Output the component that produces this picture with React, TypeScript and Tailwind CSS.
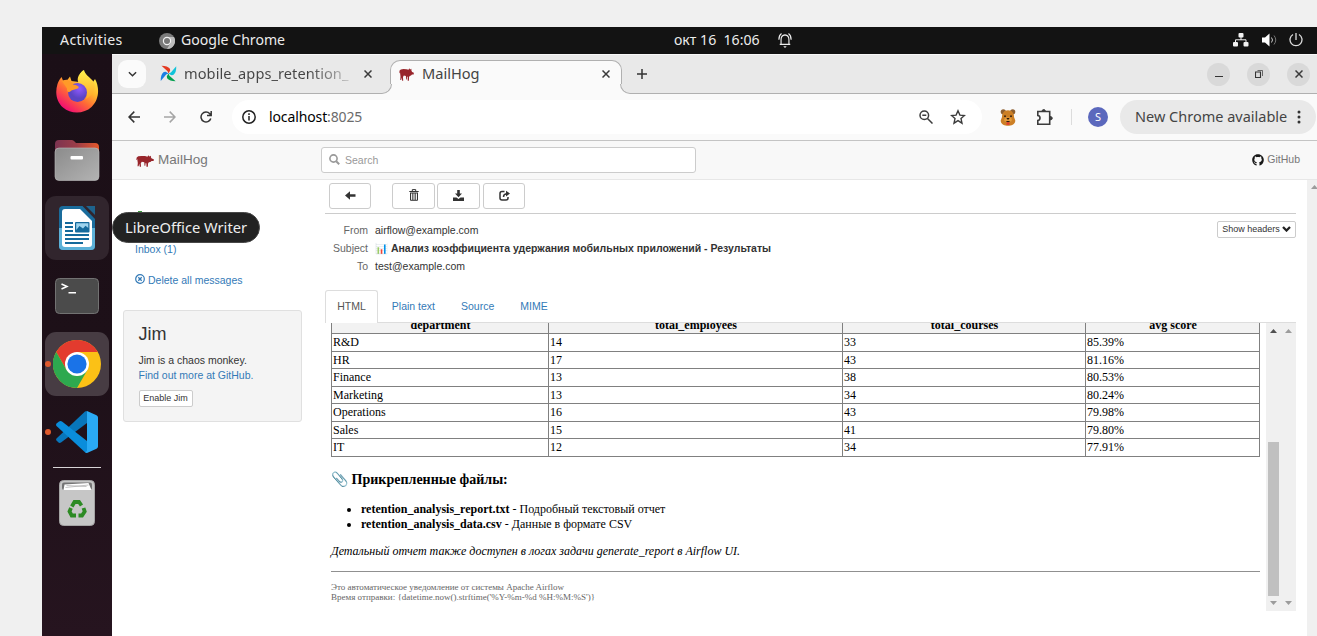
import React from "react";
import { FaGithub } from "react-icons/fa";

const UI = "font-['Noto_Sans',sans-serif]";

function Pig({ className }: { className?: string }) {
  return (
    <svg viewBox="0 0 20 14" className={className} fill="#98252b" preserveAspectRatio="none">
      <path d="M.3 5.500 .8 2.800 2.500 1.500 6 1.100 10 1.300 12.800 2 13.600 .3 14.800 1.700 16.500 .8 16.600 2.900 17.500 4.200 19.800 5 19.600 6.900 17.300 7.100 16 8.200 14.300 8.500 13.400 9.800 13.200 13.700 11.600 13.700 11.600 9.800 10.700 9.200 10.300 12.500 9.400 12.500 9.200 8.600 6.500 8 5.300 9.700 5.600 13.700 4.200 13.700 3.700 10.300 2.900 13 1.700 13 2 9.200 1.600 6.500 1.300 4.300 .9 5.700Z" />
    </svg>
  );
}

function Pinwheel() {
  return (
    <svg viewBox="0 0 18 18" className="h-[17px] w-[17px] shrink-0">
      <path d="M9 9 8 6.500 1.600 .8Q8 .8 10.500 4L10.800 5.800Z" fill="#e43921" />
      <path d="M9 9 11.500 8 17.200 1.200Q17.500 8 14 10.500L12 10.800Z" fill="#11c3d9" />
      <path d="M9 9 10 11.500 16.600 17.200Q10 17.200 7.500 14L7.200 12Z" fill="#04a04f" />
      <path d="M9 9 6.500 10 .8 17Q.5 10 4 7.500L6 7.200Z" fill="#1b7fe4" />
    </svg>
  );
}

function ChromeLogo({ className }: { className?: string }) {
  return (
    <svg viewBox="0 0 48 48" className={className}>
      <circle cx="24" cy="24" r="24" fill="#fbc116" />
      <path d="M3.200 12A24 24 0 0 1 44.800 12H24L13.600 30Z" fill="#e33b2e" />
      <path d="M3.200 12 13.600 30 24 36 34.400 30 24 48A24 24 0 0 1 3.200 12Z" fill="#2da94f" />
      <circle cx="24" cy="24" r="12" fill="#fff" />
      <circle cx="24" cy="24" r="9.600" fill="#1a73e8" />
    </svg>
  );
}

function ChromeMono() {
  return (
    <svg viewBox="0 0 16 16" className="ml-[36px] h-4 w-4">
      <circle cx="8" cy="8" r="8" fill="#7b7b7b" />
      <path d="M8 4H15A8 8 0 0 1 8 16L11.500 10Z" fill="#bcbcbc" />
      <circle cx="8" cy="8" r="4.200" fill="#f2f2f2" />
      <circle cx="8" cy="8" r="3" fill="#777" />
    </svg>
  );
}

function Firefox() {
  return (
    <svg viewBox="0 0 44 44" className="-mt-[2px] h-11 w-11">
      <defs>
        <linearGradient id="fox" x1=".85" y1=".1" x2=".25" y2=".95">
          <stop offset="0" stopColor="#fff04a" />
          <stop offset=".35" stopColor="#ffb52c" />
          <stop offset=".62" stopColor="#ff6b35" />
          <stop offset="1" stopColor="#f20d72" />
        </linearGradient>
        <linearGradient id="tail" x1=".5" y1="0" x2=".5" y2="1">
          <stop offset="0" stopColor="#fff14c" />
          <stop offset="1" stopColor="#ffa62a" />
        </linearGradient>
        <radialGradient id="globe" cx=".6" cy=".3">
          <stop offset="0" stopColor="#9059ff" />
          <stop offset="1" stopColor="#5b44c4" />
        </radialGradient>
      </defs>
      <path d="M2.500 15C3.500 11.500 5.500 9.500 6.500 8L8 11.500C9.500 11 11 10.500 12.500 10.800L15 7.500 16.500 12 24 13 25 5 29 1C30 6 35 8 38 13L40 10C45 19 44 31 36.500 38 29 45 16 45.500 8 38.500 1 32 0 23 2.500 15Z" fill="url(#fox)" />
      <path d="M28.500 1C22.500 6 21.500 11 24 14.500 31 18.500 33 25 31 30 39 26 42 18 38 12 34 8 30 6 28.500 1Z" fill="url(#tail)" />
      <circle cx="22.500" cy="23.500" r="9.500" fill="url(#globe)" />
      <path d="M7 12C13 10 17 13 18 15.500 22 16 24.500 17.500 23.500 19 20 21 17 20.500 16 22 13.500 24.500 11.500 22.500 12 19.500Z" fill="#ff9a28" />
    </svg>
  );
}

function Files() {
  return (
    <svg viewBox="0 0 46 42" className="-mt-px h-[42px] w-[46px]">
      <defs>
        <linearGradient id="fback"><stop offset="0" stopColor="#7c3350" /><stop offset=".5" stopColor="#9c3d48" /><stop offset="1" stopColor="#e6592b" /></linearGradient>
        <linearGradient id="ffront" x2="1" y2="1"><stop offset="0" stopColor="#8b8b8b" /><stop offset="1" stopColor="#b3b3b3" /></linearGradient>
      </defs>
      <path d="M1 5Q1 1 5 1H17.500Q19 1 20 2L22 4H41Q45 4 45 8V20H1Z" fill="url(#fback)" />
      <rect x="1" y="9" width="44" height="32.500" rx="4" fill="url(#ffront)" stroke="#bdbdbd" strokeWidth=".6" />
      <rect x="16.500" y="17" width="12.500" height="3.500" rx="1" fill="#fff" />
    </svg>
  );
}

function Writer() {
  return (
    <svg viewBox="0 0 38 46" className="h-[46px] w-[38px]">
      <path d="M5 1H24.500L37 14V41Q37 45 33 45H5Q1 45 1 41V5Q1 1 5 1Z" fill="#1a6c9c" />
      <path d="M1 23H37V41Q37 45 33 45H5Q1 45 1 41Z" fill="#5cb1d8" />
      <path d="M28 1H37V10Z" fill="#1e638d" />
      <path d="M7 4H22L34 16V39Q34 42 31 42H7Q4 42 4 39V7Q4 4 7 4Z" fill="#fff" />
      <g fill="#156a9c">
        <path d="M7 17h8v2H7zM7 21h8v2H7zM7 25h8v2H7zM7 29h24v2H7zM7 33h24v2H7zM7 37h18v2H7z" />
        <rect x="17" y="17" width="14.500" height="10.500" rx="1" />
      </g>
      <path d="M18.200 18.200H30.300V23L27.500 20.800 25 23.500 21.500 21 18.200 25Z" fill="#9ed4ee" />
    </svg>
  );
}

function Terminal() {
  return (
    <svg viewBox="0 0 44 36" className="h-9 w-11">
      <rect x=".5" y=".5" width="43" height="35" rx="4" fill="#4b4b4b" stroke="#727272" />
      <path d="M6.500 6 12 8.500 6.500 11M13.500 14.700H21" fill="none" stroke="#fff" strokeWidth="1.500" />
    </svg>
  );
}

function Code() {
  return (
    <svg viewBox="0 0 42 42" className="h-[42px] w-[42px]">
      <path d="M.5 27.500 29 .5 31 0V12L5 31.500Q3.500 32.500 2 31L.5 29.500Q-.3 28.500 .5 27.500Z" fill="#0876bb" />
      <path d="M.5 12.500 3 10.500Q4.500 9.500 6 10.500L31 30V42L29 41.300 .5 15Q-.3 13.500 .5 12.500Z" fill="#0a8ddb" />
      <path d="M31 0 40.500 4.200Q42 5 42 6.500V35.500Q42 37 40.500 37.800L31 42 29 41.300 31 40V2Z" fill="#2aaaf4" />
    </svg>
  );
}

function Trash() {
  return (
    <svg viewBox="0 0 36 46" className="-mt-[3px] h-[46px] w-9">
      <rect x=".5" y=".5" width="35" height="45" rx="4" fill="#c6c6c6" stroke="#a4a4a4" />
      <rect x="3" y="2.500" width="30" height="7.500" rx="2" fill="#747474" />
      <path d="M5.500 4.500 29.500 3 32.500 10H4.500Z" fill="#fff" />
      <path d="M7.500 5.500 27.500 6.500M6.500 7.500 29.500 5" stroke="#aaa" strokeWidth=".7" />
      <g fill="none" stroke="#2c8a23" strokeWidth="3.800">
        <path d="M12.800 26.500 15.500 22H20L22.500 25.500" />
        <path d="M24.500 28 25.700 31.500 23 35.500H19.500" />
        <path d="M17 35.500H12.700L10.500 31.500 12 28" />
      </g>
    </svg>
  );
}

function Tile({ children, tone = "", dot }: { children: React.ReactNode; tone?: string; dot?: boolean }) {
  return (
    <div className={`relative flex h-16 w-16 shrink-0 items-center justify-center rounded-[11px] ${tone}`}>
      {dot && <span className="absolute left-0 top-[29px] h-[6px] w-[6px] rounded-full bg-[#e05a2c]" />}
      {children}
    </div>
  );
}

function Dock() {
  return (
    <aside className="relative flex w-[70px] shrink-0 flex-col items-center gap-1 bg-gradient-to-b from-[#1b0f17] via-[#1d1018] to-[#26141f] pt-[6px]">
      <Tile><Firefox /></Tile>
      <Tile><Files /></Tile>
      <Tile tone="bg-[#31252d]"><Writer /></Tile>
      <Tile><Terminal /></Tile>
      <Tile tone="bg-[#473c43]" dot><ChromeLogo className="h-12 w-12" /></Tile>
      <Tile dot><Code /></Tile>
      <div className="-mt-[1px] h-px w-12 shrink-0 bg-[#d8d4d6]" />
      <Tile><Trash /></Tile>
      <div className={`absolute left-[70px] top-[158px] z-10 flex h-[31px] w-[148px] items-center justify-center rounded-full border border-[#484848] bg-[#222] text-[14.700px] whitespace-nowrap text-[#eee] ${UI}`}>
        LibreOffice Writer
      </div>
    </aside>
  );
}

function TopBar() {
  return (
    <header className={`flex h-[27px] shrink-0 items-center bg-[#131313] pl-[18px] text-[14.100px] text-[#ececec] ${UI}`}>
      <span className="-mt-[2px] w-[63px] tracking-[0.400px] whitespace-nowrap">Activities</span>
      <ChromeMono />
      <span className="-mt-[2px] ml-[6px] w-[493px] whitespace-nowrap">Google Chrome</span>
      <span className="-mt-[2px] w-[104px] whitespace-pre">окт 16  16:06</span>
      <svg viewBox="0 0 16 18" className="-mt-px h-[17px] w-[14px]" fill="none" stroke="#eee" strokeWidth="1.300">
        <path d="M2 13.500H14M3.500 13.500V8Q3.500 3 8 2.500 12.500 3 12.500 8V13.500M1 8Q1 3 4 1M15 8Q15 3 12 1" />
        <path d="M6 15.500H10L8 17.500Z" fill="#eee" stroke="none" />
      </svg>
      <div className="-mt-px mr-[14px] ml-auto flex items-center gap-[12.500px]">
        <svg viewBox="0 0 16 14" className="h-[14px] w-4" fill="#f2f2f2">
          <rect x="5.500" y="0" width="5" height="4.500" rx="1" /><rect x="0" y="9" width="5" height="4.500" rx="1" /><rect x="10.500" y="9" width="5" height="4.500" rx="1" />
          <path d="M2.500 9V6.800H13V9M8 4V7" fill="none" stroke="#f2f2f2" />
        </svg>
        <svg viewBox="0 0 15 14" className="h-[14px] w-[15px]">
          <path d="M0 4.500H3L7.500 .5V13.500L3 9.500H0Z" fill="#fff" />
          <path d="M9.500 4.500Q11.500 7 9.500 9.500" fill="none" stroke="#ccc" /><path d="M12 2.500Q15.500 7 12 11.500" fill="none" stroke="#777" />
        </svg>
        <svg viewBox="0 0 14 14" className="h-[14px] w-[14px]" fill="none" stroke="#ddd" strokeWidth="1.300">
          <path d="M7 0V7M4 1.500A6 6 0 1 0 10 1.500" />
        </svg>
      </div>
    </header>
  );
}

function Cross({ className = "" }: { className?: string }) {
  return (
    <svg viewBox="0 0 8 8" className={`h-2 w-2 shrink-0 ${className}`} stroke="#3a3a3a" strokeWidth="1.500"><path d="M.5 .5 7.500 7.500M7.500 .5 .5 7.500" /></svg>
  );
}

function TabStrip() {
  return (
    <div className={`flex h-10 shrink-0 items-center border-t border-b border-t-[#f8f8f8] border-b-[#b0b0b0] bg-[#e9e9e9] pl-[6px] text-[14.600px] text-[#444] ${UI}`}>
      <div className="flex h-7 w-7 items-center justify-center rounded-[9px] bg-[#fbfbfb]">
        <svg viewBox="0 0 10 6" className="h-[6px] w-[9px]" fill="none" stroke="#333" strokeWidth="1.600"><path d="M1 1 5 5 9 1" /></svg>
      </div>
      <div className="ml-[14px] flex w-[230px] items-center">
        <Pinwheel />
        <span className="ml-[7px] w-[166px] overflow-hidden bg-gradient-to-r from-[#444] from-75% to-[#c8c8c8] bg-clip-text tracking-[0.060px] whitespace-nowrap text-transparent">mobile_apps_retention_</span>
        <Cross className="ml-[14px]" />
      </div>
      <div className="relative -mb-[1px] flex h-[34px] w-[232px] items-center self-end rounded-t-[10px] border-x border-t border-[#b0b0b0] bg-[#fafafa] pb-[7px] pl-2">
        <span className="absolute bottom-0 -left-[10px] h-[10px] w-[11px] bg-[#fafafa]"><span className="block h-full w-full rounded-br-[10px] border-r border-b border-[#b0b0b0] bg-[#e9e9e9]" /></span>
        <span className="absolute -right-[10px] bottom-0 h-[10px] w-[11px] bg-[#fafafa]"><span className="block h-full w-full rounded-bl-[10px] border-b border-l border-[#b0b0b0] bg-[#e9e9e9]" /></span>
        <Pig className="h-[13px] w-[15px]" />
        <span className="ml-2 -mt-px">MailHog</span>
        <Cross className="mr-[11px] ml-auto" />
      </div>
      <svg viewBox="0 0 10 10" className="ml-[15px] h-[10px] w-[10px]" stroke="#333" strokeWidth="1.500"><path d="M5 0V10M0 5H10" /></svg>
      <div className="mr-[7px] ml-auto flex gap-[17px]">
        <span className="flex h-[23px] w-[23px] items-center justify-center rounded-full bg-[#d9d9d9]"><span className="mt-[5px] h-px w-2 bg-[#333]" /></span>
        <span className="flex h-[23px] w-[23px] items-center justify-center rounded-full bg-[#d9d9d9]">
          <svg viewBox="0 0 8 8" className="h-2 w-2" fill="none" stroke="#333"><path d="M.5 2H5.500V7.500H.5Z" strokeWidth="1.100" /><path d="M2.500 .5H7.500V6" strokeWidth=".7" /></svg>
        </span>
        <span className="flex h-[23px] w-[23px] items-center justify-center rounded-full bg-[#d9d9d9]"><Cross /></span>
      </div>
    </div>
  );
}

function Bear() {
  return (
    <svg viewBox="0 0 16 17" className="h-[17px] w-4">
      <circle cx="3.300" cy="2.800" r="2.600" fill="#8d5f30" /><circle cx="12.700" cy="2.800" r="2.600" fill="#8d5f30" />
      <path d="M8 1.200C12 1.200 14 4 14 8L15.300 11.500C15.300 15.500 11 16.800 8 16.800S.7 15.500 .7 11.500L2 8C2 4 4 1.200 8 1.200Z" fill="#cc7f25" />
      <ellipse cx="8" cy="10.800" rx="3.800" ry="2.600" fill="#e39c3c" />
      <circle cx="5" cy="7.200" r=".9" fill="#2a1a10" /><circle cx="11" cy="7.200" r=".9" fill="#2a1a10" />
      <path d="M6.300 9H9.700L8 11ZM5.500 12H10.500L8 13.500Z" fill="#2a1a10" /><path d="M6.500 13.300H9.500V15.800H6.500Z" fill="#e23a2c" />
    </svg>
  );
}

function Toolbar() {
  return (
    <div className={`flex h-[47px] shrink-0 items-center border-b border-[#c4c4c4] bg-[#fafafa] pl-4 text-[14.500px] text-[#444] ${UI}`}>
      <svg viewBox="0 0 12 12" className="h-3 w-3" fill="none" stroke="#333" strokeWidth="1.500"><path d="M6.300 .6 1 6 6.300 11.400M1 6H12" /></svg>
      <svg viewBox="0 0 12 12" className="ml-6 h-3 w-3" fill="none" stroke="#a5a5a5" strokeWidth="1.500"><path d="M5.700 .6 11 6 5.700 11.400M11 6H0" /></svg>
      <svg viewBox="0 0 12 12" className="ml-6 h-3 w-3" fill="none" stroke="#333" strokeWidth="1.500"><path d="M10.800 7.500A5 5 0 1 1 9.800 2.700L11 4.200M11.200 0V4.500H7" /></svg>
      <div className="ml-5 flex h-[34px] w-[750px] items-center rounded-full bg-white pl-[10px]">
        <svg viewBox="0 0 14 14" className="h-[14px] w-[14px]" fill="none" stroke="#222" strokeWidth="1.500"><circle cx="7" cy="7" r="6.200" /><path d="M7 6V10.500M7 3.300V4.900" /></svg>
        <span className="-mt-[2px] ml-[13px] text-[14px] tracking-[-0.120px] whitespace-nowrap text-black">localhost<span className="text-[#6b6b6b]">:8025</span></span>
        <svg viewBox="0 0 14 14" className="mr-[17px] ml-auto h-[14px] w-[14px]" fill="none" stroke="#3c3c3c" strokeWidth="1.500"><circle cx="5.300" cy="5.300" r="4.300" /><path d="M8.500 8.500 13.500 13.500M3.300 5.300H7.300" /></svg>
        <svg viewBox="0 0 16 16" className="mr-4 h-4 w-4" fill="none" stroke="#3c3c3c" strokeWidth="1.400"><path d="M8 1.800 9.900 6.100 14.500 6.500 11 9.600 12 14.200 8 11.700 4 14.200 5 9.600 1.500 6.500 6.100 6.100Z" /></svg>
      </div>
      <div className="ml-[18px] flex items-center"><Bear />
        <svg viewBox="0 0 17 17" className="ml-5 h-[17px] w-[17px]" fill="none" stroke="#3c3c3c" strokeWidth="1.600"><path d="M1.800 2.500H13.700V15.200H1.800V11.500Q4 11.200 4 9T1.800 6.500Z" /><path d="M6 2.500Q6 .5 7.700 .5T9.400 2.500M14 7.500Q16.300 7.500 16.300 9.200T14 10.900Z" fill="#3c3c3c" strokeWidth="1" /></svg>
      </div>
      <span className="ml-[18px] h-4 w-px bg-[#dcdcdc]" />
      <span className="ml-4 flex h-5 w-5 items-center justify-center rounded-full bg-[#5b68bd] text-[11px] text-white">S</span>
      <div className="ml-3 flex h-[34px] w-[196px] items-center rounded-full bg-[#e9e9e9] pl-[15px]">
        <span className="-mt-px w-[162px] whitespace-nowrap">New Chrome available</span>
        <svg viewBox="0 0 4 14" className="h-[14px] w-1" fill="#333"><circle cx="2" cy="2" r="1.500" /><circle cx="2" cy="7" r="1.500" /><circle cx="2" cy="12" r="1.500" /></svg>
      </div>
    </div>
  );
}

function AppHeader() {
  return (
    <div className="flex h-[39px] shrink-0 items-center border-b border-[#e7e7e7] bg-[#f8f8f8] pl-6">
      <Pig className="mt-[2px] h-[12px] w-[18px]" />
      <span className="ml-[4px] w-[163px] text-[13.500px] tracking-[0.050px] text-[#777]">MailHog</span>
      <div className="flex h-[26px] w-[375px] items-center rounded-[3px] border border-[#ccc] bg-white pl-[7px]">
        <svg viewBox="0 0 11 11" className="-mt-px h-[11px] w-[11px]" fill="none" stroke="#999"><circle cx="4.500" cy="4.500" r="3.600" strokeWidth="1.600" /><path d="M7.200 7.200 10.200 10.200" strokeWidth="2" /></svg>
        <span className="mt-px ml-[5px] text-[10.500px] text-[#999]">Search</span>
      </div>
      <span className="mr-[17px] ml-auto flex items-center gap-[3px] text-[10.500px] text-[#777]"><FaGithub className="h-3 w-3 text-[#181818]" />GitHub</span>
    </div>
  );
}

function Sidebar() {
  return (
    <nav className="w-[213px] shrink-0 pl-[11px] text-[10.500px] text-[#337ab7]">
      <div className="flex flex-col items-start pl-3">
        <span className="mt-[31px] ml-[3px] h-[6px] w-[4px] bg-[#3c9a3c]" />
        <span className="mt-[24px] leading-[16px]">Inbox (1)</span>
        <span className="mt-4 flex h-4 items-center gap-[3px]">
          <svg viewBox="0 0 10 10" className="-mt-[4px] h-[10px] w-[10px]" fill="none" stroke="#337ab7"><circle cx="5" cy="5" r="4.300" strokeWidth="1.200" /><path d="M3.300 3.300 6.700 6.700M6.700 3.300 3.300 6.700" strokeWidth="1.300" /></svg>
          Delete all messages
        </span>
      </div>
      <div className="mt-[21px] flex h-[112px] w-[179px] flex-col items-start rounded-[3px] border border-[#e0e0e0] bg-[#f4f4f4] pl-[14.500px]">
        <span className="mt-[12px] text-[18px] leading-[22px] text-[#333]">Jim</span>
        <span className="mt-[8px] leading-[15px] text-[#333]">Jim is a chaos monkey.</span>
        <span className="leading-[15px]">Find out more at GitHub.</span>
        <span className="mt-[7px] flex h-[17px] w-[54px] items-center justify-center rounded-[2px] border border-[#ccc] bg-white text-[9px] whitespace-nowrap text-[#333]">Enable Jim</span>
      </div>
    </nav>
  );
}

function ToolButton({ className, children }: { className: string; children: React.ReactNode }) {
  return <span className={`flex h-[26px] items-center justify-center rounded-[3px] border border-[#ccc] bg-white pb-[2px] ${className}`}>{children}</span>;
}

function Actions() {
  return (
    <div className="flex h-[34px] shrink-0 items-start border-b border-[#ccc] pt-[3px] pl-1">
      <ToolButton className="w-[42px]">
        <svg viewBox="0 0 11 9" className="h-[9px] w-[11px]" fill="#333"><path d="M0 4.500 5 .2V3.200H10.500V5.800H5V8.800Z" /></svg>
      </ToolButton>
      <ToolButton className="ml-[21px] w-[43px]">
        <svg viewBox="0 0 10 12" className="h-3 w-[10px]" fill="none" stroke="#333"><path d="M.3 2.500H9.700M3.300 2V.6H6.700V2M1.500 4V11.300H8.500V4" /><path d="M3.400 4V11M5 4V11M6.600 4V11" strokeWidth=".8" /><path d="M1 4H9" /></svg>
      </ToolButton>
      <ToolButton className="ml-[2px] w-[43px]">
        <svg viewBox="0 0 11 11" className="h-[11px] w-[11px]" fill="#333"><path d="M4.200 0H6.800V3.500H9L5.500 7.200 2 3.500H4.200Z" /><path d="M0 7.500H3.500L5.500 9 7.500 7.500H11V11H0Z" /></svg>
      </ToolButton>
      <ToolButton className="ml-[3px] w-[42px]">
        <svg viewBox="0 0 11 11" className="h-[11px] w-[11px]" fill="none" stroke="#333" strokeWidth="1.500"><path d="M5.500 1.500H3Q1 1.500 1 3.500V8Q1 10 3 10H7Q9 10 9 8V7" /><path d="M4.500 7Q4.500 4 7.500 3.700" /><path d="M7 .8 11 3.600 7 6.500Z" fill="#333" stroke="none" /></svg>
      </ToolButton>
    </div>
  );
}

const headers = [
  { label: "From", value: "airflow@example.com" },
  { label: "Subject", value: "📊 Анализ коэффициента удержания мобильных приложений - Результаты", bold: true },
  { label: "To", value: "test@example.com" },
];

const rows = [
  ["R&D", "14", "33", "85.39%"],
  ["HR", "17", "43", "81.16%"],
  ["Finance", "13", "38", "80.53%"],
  ["Marketing", "13", "34", "80.24%"],
  ["Operations", "16", "43", "79.98%"],
  ["Sales", "15", "41", "79.80%"],
  ["IT", "12", "34", "77.91%"],
];

const GRID = "grid grid-cols-[217px_294px_243px_174px]";

function Arrow({ down, dark }: { down?: boolean; dark?: boolean }) {
  return <svg viewBox="0 0 7 4" className={`h-1 w-[7px] ${dark ? "fill-[#505050]" : "fill-[#9c9c9c]"}`}><path d={down ? "M0 0H7L3.500 4Z" : "M0 4H7L3.500 0Z"} /></svg>;
}

function Message() {
  return (
    <div className="flex h-[288px] w-[971px] shrink-0 overflow-hidden">
      <div className="w-[935px] shrink-0 pl-[6px] font-['Liberation_Serif',serif] text-[12px] text-black">
        <div className="-mt-[6px] border-l border-[#808080]">
          <div className={`${GRID} h-[17px] border-b border-[#808080] bg-[#f2f2f2] text-center leading-[17px] font-bold`}>
            {["department", "total_employees", "total_courses", "avg score"].map((h) => <span key={h} className="border-r border-[#808080] pl-px">{h}</span>)}
          </div>
          {rows.map((r) => (
            <div key={r[0]} className={`${GRID} h-[17.500px] border-b border-[#808080] leading-[17px]`}>
              {r.map((c, i) => <span key={i} className="border-r border-[#808080] pl-[1px]">{c}</span>)}
            </div>
          ))}
        </div>
        <h3 className="mt-[13px] text-[14.040px] leading-[18px] font-bold">📎 Прикрепленные файлы:</h3>
        <ul className="mt-[14px] list-disc pl-[30px] leading-[15px]">
          <li><b>retention_analysis_report.txt</b> - Подробный текстовый отчет</li>
          <li><b>retention_analysis_data.csv</b> - Данные в формате CSV</li>
        </ul>
        <p className="mt-3 leading-[15px] italic">Детальный отчет также доступен в логах задачи generate_report в Airflow UI.</p>
        <div className="mt-[12px] h-px w-[929px] bg-[#909090]" />
        <p className="mt-[10px] text-[9px] leading-[10px] text-[#666]">Это автоматическое уведомление от системы Apache Airflow<br />{"Время отправки: {datetime.now().strftime('%Y-%m-%d %H:%M:%S')}"}</p>
      </div>
      <div className="ml-[6px] flex w-[15px] flex-col items-center bg-[#f0f0f0] pt-[6px] pb-[6px]">
        <Arrow dark />
        <span className="mt-[109px] h-[154px] w-[11px] bg-[#c0c0c0]" />
        <span className="mt-auto"><Arrow down /></span>
      </div>
      <div className="flex w-[15px] flex-col items-center justify-between bg-[#f0f0f0] pt-[6px] pb-[6px]"><Arrow /><Arrow down /></div>
    </div>
  );
}

function MailView() {
  return (
    <main className="flex w-[971px] shrink-0 flex-col text-[10.500px] text-[#333]">
      <Actions />
      <div className="flex h-[76px] shrink-0 justify-between pt-[7px]">
        <div className="pt-px">
          {headers.map((h) => (
            <div key={h.label} className="flex h-[18px] items-center whitespace-nowrap">
              <span className="w-[43px] text-right text-[#666]">{h.label}</span>
              <span className={`ml-[7px] ${h.bold ? "font-bold" : ""}`}>{h.value}</span>
            </div>
          ))}
        </div>
        <span className="flex h-[17px] w-[79px] items-center justify-center gap-[2px] rounded-[2px] border border-[#ccc] text-[9px] whitespace-nowrap">
          Show headers
          <svg viewBox="0 0 9 6" className="-mt-px h-[6px] w-[9px]" fill="none" stroke="#222" strokeWidth="2.300"><path d="M1 1 4.500 4.500 8 1" /></svg>
        </span>
      </div>
      <div className="flex h-[33px] shrink-0 items-center border-b border-[#ddd] text-[#337ab7]">
        <span className="-mb-[1px] flex h-[33px] w-[53px] items-center justify-center rounded-t-[3px] border-x border-t border-[#ddd] bg-white text-[#555]">HTML</span>
        <span className="mt-px ml-[13.800px]">Plain text</span>
        <span className="mt-px ml-[26px]">Source</span>
        <span className="mt-px ml-[26px]">MIME</span>
      </div>
      <Message />
    </main>
  );
}

export default function App() {
  return (
    <div className="h-[636px] w-[1317px] overflow-hidden bg-[#f0f0f0] pt-[27px] pl-[42px] font-['Liberation_Sans',sans-serif]">
      <div className="flex h-full flex-col">
        <TopBar />
        <div className="flex min-h-0 flex-1">
          <Dock />
          <div className="flex min-w-0 flex-1 flex-col bg-white">
            <TabStrip />
            <Toolbar />
            <AppHeader />
            <div className="flex min-h-0 flex-1">
              <Sidebar />
              <MailView />
              <div className="ml-auto w-[10px] overflow-hidden bg-[#f0f0f0] pt-[5px] pl-[4px]"><Arrow /></div>
            </div>
          </div>
        </div>
      </div>
    </div>
  );
}
